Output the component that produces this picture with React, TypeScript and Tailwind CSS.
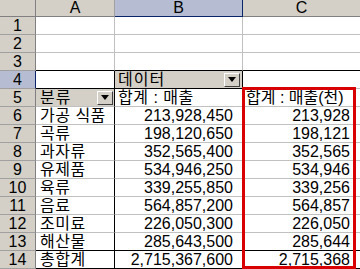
import React from "react";

const rows: [string, string, string][] = [
  ["가공 식품", "213,928,450", "213,928"],
  ["곡류", "198,120,650", "198,121"],
  ["과자류", "352,565,400", "352,565"],
  ["유제품", "534,946,250", "534,946"],
  ["육류", "339,255,850", "339,256"],
  ["음료", "564,857,200", "564,857"],
  ["조미료", "226,050,300", "226,050"],
  ["해산물", "285,643,500", "285,644"],
];

const font = { fontFamily: '"Liberation Sans", "Noto Sans CJK KR", sans-serif' };

function DropBtn() {
  return (
    <div className="w-[16px] h-[14px] shrink-0 bg-[#d4d0c8] border border-t-white border-l-white border-r-[#404040] border-b-[#404040] flex items-center justify-center">
      <svg width="8" height="5" viewBox="0 0 8 5">
        <path d="M0 0h8L4 5z" fill="#000" />
      </svg>
    </div>
  );
}

function RowHead({ n, sel }: { n: number; sel?: boolean }) {
  return (
    <div
      className={`w-[36px] shrink-0 h-full flex items-center justify-center border-r border-b text-[16px] text-black ${
        sel ? "bg-[#b6bdd2] border-r-[#0a246a] border-b-[#a0a0a0]" : "bg-[#d4d0c8] border-r-[#808080] border-b-[#a0a0a0]"
      }`}
    >
      {n}
    </div>
  );
}

export default function App() {
  return (
    <div className="relative w-[360px] h-[269px] overflow-hidden bg-white text-black leading-none" style={font}>
      {/* column headers */}
      <div className="flex h-[17px]">
        <div className="w-[36px] shrink-0 bg-[#d4d0c8] border-r border-b border-r-[#808080] border-b-[#808080]" />
        <div className="w-[79px] shrink-0 bg-[#d4d0c8] border-r border-b border-r-[#a0a0a0] border-b-[#808080] flex items-center justify-center text-[16px]">A</div>
        <div className="w-[128px] shrink-0 bg-[#b6bdd2] border-r border-b border-r-[#0a246a] border-b-[#0a246a] flex items-center justify-center text-[16px]">B</div>
        <div className="w-[117px] shrink-0 bg-[#d4d0c8] border-b border-b-[#808080] flex items-center justify-center text-[16px]">C</div>
      </div>

      {/* rows 1-3 */}
      {[1, 2, 3].map((n) => (
        <div key={n} className="flex h-[18px]">
          <RowHead n={n} />
          <div className={`w-[79px] shrink-0 border-r border-b border-r-[#c0c0c0] ${n === 3 ? "border-b-black" : "border-b-[#c0c0c0]"}`} />
          <div className={`w-[128px] shrink-0 border-r border-b border-r-[#c0c0c0] ${n === 3 ? "border-b-black" : "border-b-[#c0c0c0]"}`} />
          <div className={`w-[117px] shrink-0 border-b ${n === 3 ? "border-b-black" : "border-b-[#c0c0c0]"}`} />
        </div>
      ))}

      {/* row 4 */}
      <div className="flex h-[18px]">
        <RowHead n={4} sel />
        <div className="w-[79px] shrink-0 border-r border-b border-r-black border-b-black" />
        <div className="w-[128px] shrink-0 border-r border-b border-r-black border-b-black bg-[#d4d0c8] flex items-center justify-between pl-[3px] pr-[2px] text-[16px]">
          <span className="tracking-[1px]">데이터</span>
          <DropBtn />
        </div>
        <div className="w-[117px] shrink-0 border-b border-b-[#c0c0c0]" />
      </div>

      {/* row 5 */}
      <div className="flex h-[18px]">
        <RowHead n={5} />
        <div className="w-[79px] shrink-0 border-r border-b border-r-black border-b-[#c0c0c0] bg-[#d4d0c8] flex items-center justify-between pl-[4px] pr-[1px] text-[16px]">
          <span className="tracking-[1px]">분류</span>
          <DropBtn />
        </div>
        <div className="w-[128px] shrink-0 border-r border-b border-r-[#c0c0c0] border-b-[#c0c0c0] flex items-center pl-[3px] text-[16px] tracking-[0.5px] whitespace-nowrap">
          합계 : 매출
        </div>
        <div className="w-[117px] shrink-0 border-b border-b-[#c0c0c0] flex items-center pl-[3px] text-[16px] whitespace-nowrap">
          합계 : 매출(천)
        </div>
      </div>

      {/* data rows */}
      {rows.map(([name, sum, k], i) => (
        <div key={name} className="flex h-[18px]">
          <RowHead n={i + 6} />
          <div className={`w-[79px] shrink-0 border-r border-b border-r-black flex items-center pl-[4px] text-[16px] tracking-[0.5px] whitespace-nowrap ${i === 7 ? "border-b-black" : "border-b-[#c0c0c0]"}`}>
            {name}
          </div>
          <div className={`w-[128px] shrink-0 border-r border-b border-r-[#c0c0c0] flex items-center justify-end pr-[9px] text-[16px] ${i === 7 ? "border-b-black" : "border-b-[#c0c0c0]"}`}>
            {sum}
          </div>
          <div className={`w-[117px] shrink-0 border-b flex items-center justify-end pr-[10px] text-[16px] ${i === 7 ? "border-b-black" : "border-b-[#c0c0c0]"}`}>
            {k}
          </div>
        </div>
      ))}

      {/* row 14 total */}
      <div className="flex h-[18px]">
        <RowHead n={14} />
        <div className="w-[79px] shrink-0 border-r border-b border-r-black border-b-black flex items-center pl-[4px] text-[16px] tracking-[0.5px]">총합계</div>
        <div className="w-[128px] shrink-0 border-r border-b border-r-[#c0c0c0] border-b-black flex items-center justify-end pr-[9px] text-[16px]">2,715,367,600</div>
        <div className="w-[117px] shrink-0 border-b border-b-black flex items-center justify-end pr-[10px] text-[16px]">2,715,368</div>
      </div>

      {/* red highlight box */}
      <div className="absolute left-[242px] top-[87px] w-[114px] h-[182px] border-[3px] border-[#d80000]" />
    </div>
  );
}
